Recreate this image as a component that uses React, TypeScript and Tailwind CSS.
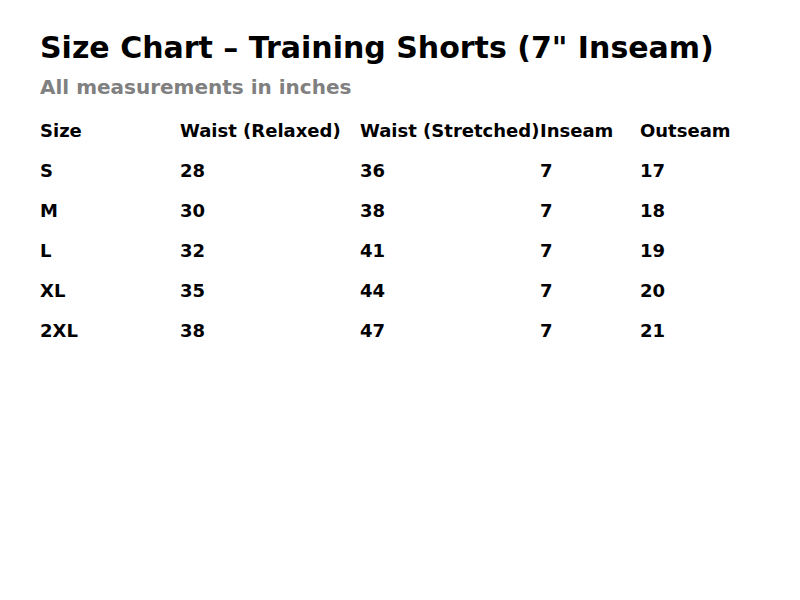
const rows = [
  ["S", "28", "36", "7", "17"],
  ["M", "30", "38", "7", "18"],
  ["L", "32", "41", "7", "19"],
  ["XL", "35", "44", "7", "20"],
  ["2XL", "38", "47", "7", "21"],
]

const headers = ["Size", "Waist (Relaxed)", "Waist (Stretched)", "Inseam", "Outseam"]

export default function App() {
  return (
    <div className="min-h-[600px] w-[800px] bg-white px-10 pt-[30px] font-['DejaVu_Sans',sans-serif] font-bold text-black">
      <h1 className="text-[30px] leading-[36px]">Size Chart – Training Shorts (7" Inseam)</h1>
      <p className="mt-[9px] text-[20px] leading-[24px] text-[#808080]">All measurements in inches</p>

      <div className="mt-[12px] grid grid-cols-[140px_180px_180px_100px_1fr] text-[18px]">
        {headers.map((h) => (
          <div key={h} className="h-10 leading-[40px] whitespace-nowrap">{h}</div>
        ))}
        {rows.map((r) =>
          r.map((c, i) => (
            <div key={r[0] + i} className="h-10 leading-[40px]">{c}</div>
          ))
        )}
      </div>
    </div>
  )
}
